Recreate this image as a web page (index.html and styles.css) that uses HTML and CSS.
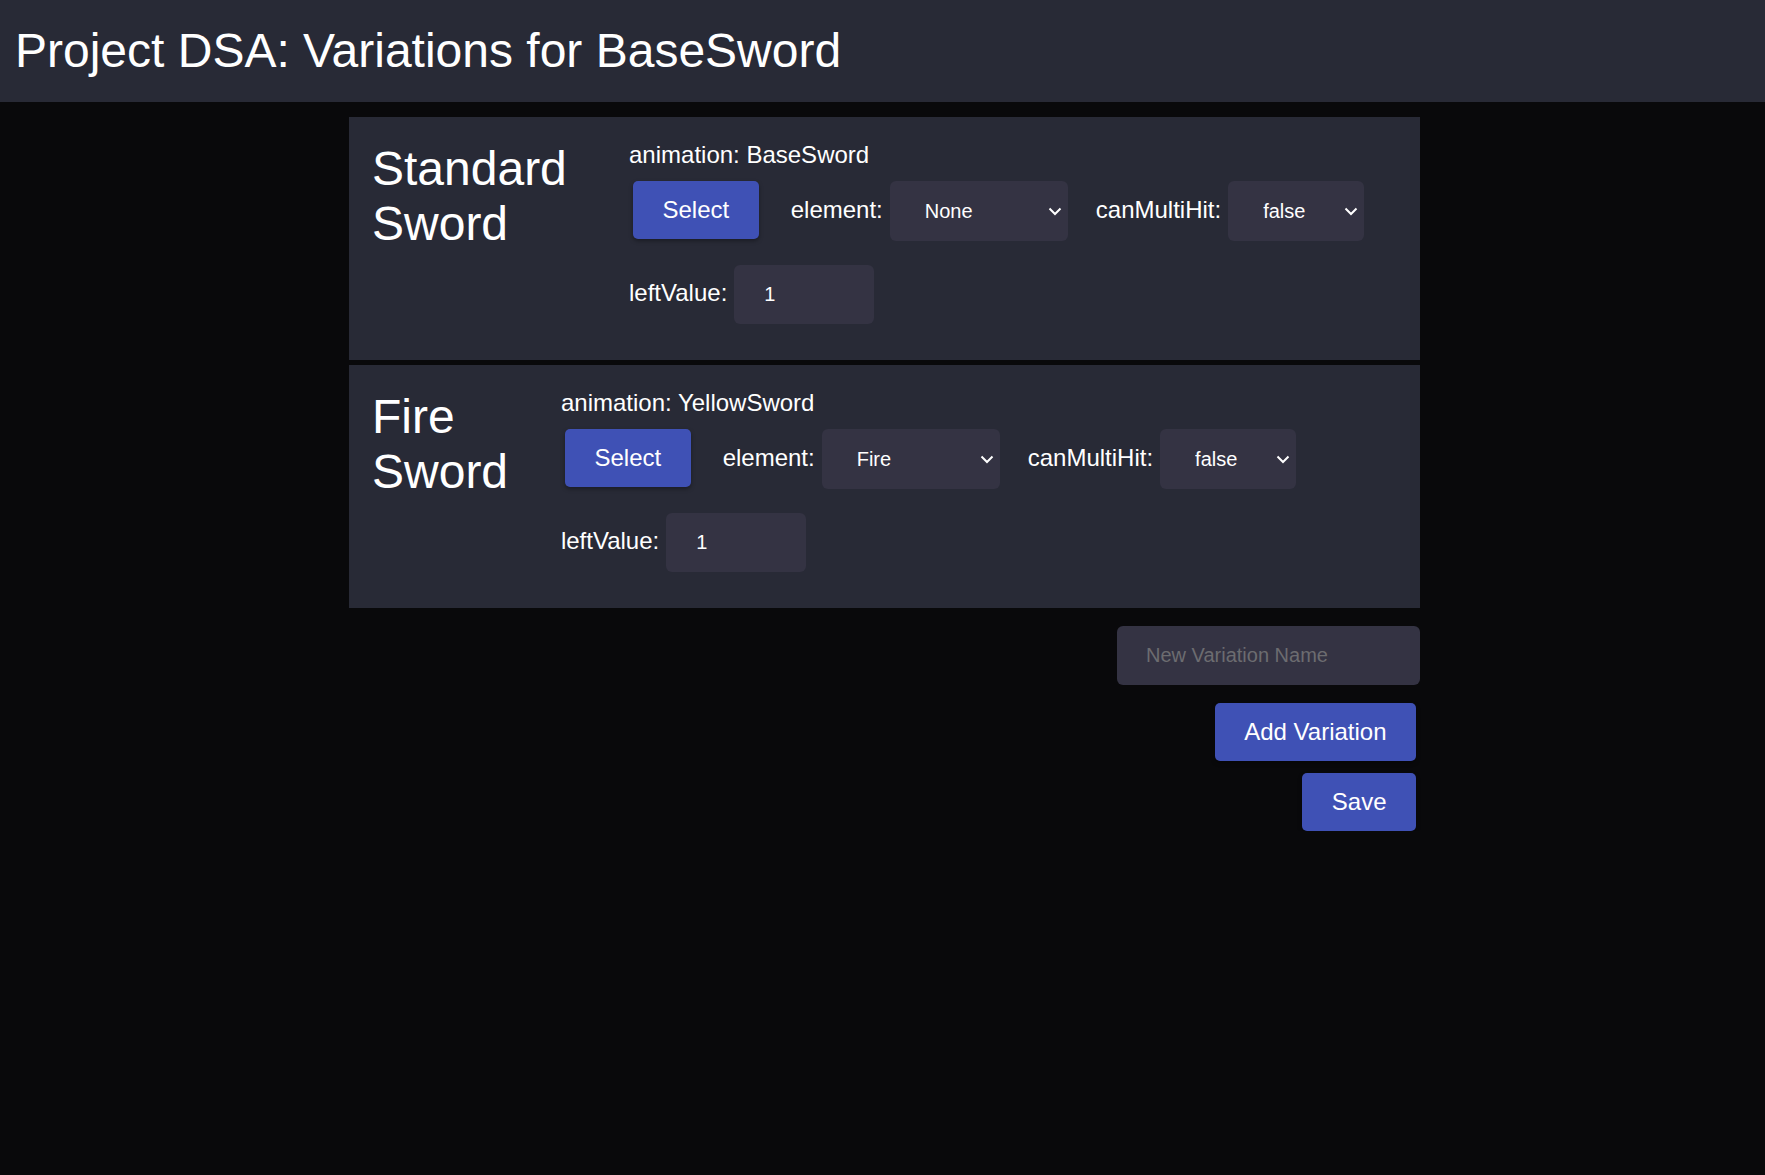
FILE: index.html
```html
<!DOCTYPE html>
<html lang="en">
<head>
<meta charset="utf-8">
<title>Project DSA: Variations for BaseSword</title>
<link rel="stylesheet" href="styles.css">
</head>
<body>
<header class="topbar">
  <h1 class="topbar-title">Project DSA: Variations for BaseSword</h1>
</header>
<main class="content">
  <div class="variations">
    <section class="variation">
      <h2 class="variation-name">Standard Sword</h2>
      <div class="variation-body">
        <div class="anim-label">animation: BaseSword</div>
        <div class="fields">
          <button class="btn" type="button">Select</button>
          <label class="field">
            <span class="field-label">element:</span>
            <span class="select-wrap">
              <select class="select select-element">
                <option selected>None</option>
                <option>Fire</option>
                <option>Ice</option>
                <option>Lightning</option>
              </select>
              <svg class="chevron" width="14" height="9" viewBox="0 0 14 9"><polyline points="1.5,1.5 7,7 12.5,1.5" fill="none" stroke="#ffffff" stroke-width="2"/></svg>
            </span>
          </label>
          <label class="field">
            <span class="field-label">canMultiHit:</span>
            <span class="select-wrap">
              <select class="select select-bool">
                <option selected>false</option>
                <option>true</option>
              </select>
              <svg class="chevron" width="14" height="9" viewBox="0 0 14 9"><polyline points="1.5,1.5 7,7 12.5,1.5" fill="none" stroke="#ffffff" stroke-width="2"/></svg>
            </span>
          </label>
          <label class="field">
            <span class="field-label">leftValue:</span>
            <input class="input input-number" type="number" value="1">
          </label>
        </div>
      </div>
    </section>
    <section class="variation">
      <h2 class="variation-name">Fire Sword</h2>
      <div class="variation-body">
        <div class="anim-label">animation: YellowSword</div>
        <div class="fields">
          <button class="btn" type="button">Select</button>
          <label class="field">
            <span class="field-label">element:</span>
            <span class="select-wrap">
              <select class="select select-element">
                <option>None</option>
                <option selected>Fire</option>
                <option>Ice</option>
                <option>Lightning</option>
              </select>
              <svg class="chevron" width="14" height="9" viewBox="0 0 14 9"><polyline points="1.5,1.5 7,7 12.5,1.5" fill="none" stroke="#ffffff" stroke-width="2"/></svg>
            </span>
          </label>
          <label class="field">
            <span class="field-label">canMultiHit:</span>
            <span class="select-wrap">
              <select class="select select-bool">
                <option selected>false</option>
                <option>true</option>
              </select>
              <svg class="chevron" width="14" height="9" viewBox="0 0 14 9"><polyline points="1.5,1.5 7,7 12.5,1.5" fill="none" stroke="#ffffff" stroke-width="2"/></svg>
            </span>
          </label>
          <label class="field">
            <span class="field-label">leftValue:</span>
            <input class="input input-number" type="number" value="1">
          </label>
        </div>
      </div>
    </section>
  </div>
  <div class="actions">
    <input class="input input-name" type="text" placeholder="New Variation Name">
    <button class="btn btn-add" type="button">Add Variation</button>
    <button class="btn" type="button">Save</button>
  </div>
</main>
</body>
</html>
```
FILE: styles.css
```css
* { box-sizing: border-box; }

html, body {
  margin: 0;
  padding: 0;
  background: #09090b;
  color: #ffffff;
  font-family: "Liberation Sans", Arial, sans-serif;
}

.topbar {
  background: #282a36;
  padding: 23px 15px 24px;
}

.topbar-title {
  margin: 0;
  font-size: 48px;
  font-weight: 400;
  line-height: 55px;
}

.content {
  width: 1071px;
  margin: 15px 0 0 349px;
}

.variations {
  display: flex;
  flex-direction: column;
  gap: 5px;
}

.variation {
  display: flex;
  align-items: flex-start;
  background: #282a36;
  padding: 24px 24px 24px 23px;
}

.variation-name {
  flex: 0 1 auto;
  margin: 0;
  font-size: 48px;
  font-weight: 400;
  line-height: normal;
}

.variation-body {
  flex: 0 1 auto;
  padding-right: 14px;
}

.anim-label {
  font-size: 24px;
  line-height: normal;
}

.fields {
  display: flex;
  flex-wrap: wrap;
  align-items: flex-start;
  padding: 12px 0;
  row-gap: 24px;
  column-gap: 28px;
}

.field {
  display: flex;
  align-items: baseline;
  font-size: 24px;
}

.field-label {
  margin-right: 7px;
  white-space: nowrap;
}

.btn {
  font-family: "Liberation Sans", Arial, sans-serif;
  font-size: 24px;
  line-height: normal;
  color: #ffffff;
  background: #3f51b5;
  border: none;
  border-radius: 5px;
  padding: 15px 29.5px;
  margin: 0 4px;
  box-shadow: 0 2px 4px rgba(0, 0, 0, 0.35);
  cursor: pointer;
}

.select-wrap {
  position: relative;
  display: block;
}

.select {
  -webkit-appearance: none;
  appearance: none;
  display: block;
  height: 60px;
  padding: 0 24px 0 35px;
  font-family: "Liberation Sans", Arial, sans-serif;
  font-size: 20px;
  color: #ffffff;
  background: #343343;
  border: none;
  border-radius: 6px;
  outline: none;
}

.select-element { width: 178px; }
.select-bool { width: 136px; }

.chevron {
  position: absolute;
  right: 6px;
  top: 50%;
  margin-top: -4px;
  pointer-events: none;
}

.input {
  display: block;
  height: 59px;
  padding: 0 30px;
  font-family: "Liberation Sans", Arial, sans-serif;
  font-size: 20px;
  color: #ffffff;
  background: #343343;
  border: none;
  border-radius: 6px;
  outline: none;
}

.input-number { width: 140px; -moz-appearance: textfield; }
.input-number::-webkit-inner-spin-button,
.input-number::-webkit-outer-spin-button {
  -webkit-appearance: none;
  margin: 0;
}

.input-name {
  width: 303px;
  padding: 0 29px;
}

.input-name::placeholder {
  color: #6c6c70;
}

.actions {
  display: flex;
  flex-direction: column;
  align-items: flex-end;
  margin-top: 18px;
}

.input-name { margin-bottom: 18px; }
.btn-add { margin-bottom: 12px; }
```
